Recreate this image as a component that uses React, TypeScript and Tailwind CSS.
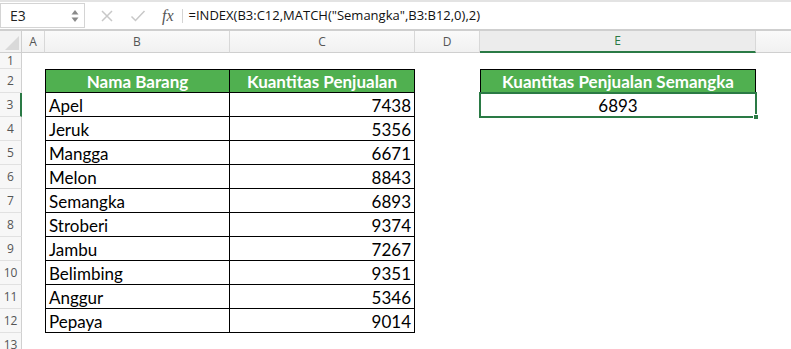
import React from "react";

const data: [string, number][] = [
  ["Apel", 7438],
  ["Jeruk", 5356],
  ["Mangga", 6671],
  ["Melon", 8843],
  ["Semangka", 6893],
  ["Stroberi", 9374],
  ["Jambu", 7267],
  ["Belimbing", 9351],
  ["Anggur", 5346],
  ["Pepaya", 9014],
];

const cellFont = { fontFamily: "Lato, 'Open Sans', sans-serif" };

function RowHead({ n, active }: { n: number; active?: boolean }) {
  return (
    <div
      className={`flex items-center justify-center border-b border-[#e1e1e1] bg-[#f7f7f7] text-[12px] text-[#555] ${
        active ? "border-r-2 border-r-[#2a7a45] bg-[#eaeaea]" : "border-r border-r-[#d0d0d0]"
      }`}
      style={{ fontFamily: "'Open Sans', sans-serif" }}
    >
      {n}
    </div>
  );
}

export default function App() {
  const colTemplate = "22px 23px 185px 185px 65px 276px 1fr";
  return (
    <div className="h-[349px] w-[791px] overflow-hidden bg-white" style={cellFont}>
      {/* Formula bar */}
      <div className="flex h-[29px] items-center border-t-2 border-[#e3e3e3] bg-white">
        <div className="flex h-[25px] w-[85px] items-center justify-between border border-[#d4d4d4] bg-white pl-[9px] pr-[5px]">
          <span className="text-[14px] text-[#222]" style={{ fontFamily: "'Open Sans', sans-serif" }}>E3</span>
          <svg width="8" height="16" viewBox="0 0 8 16">
            <path d="M4 2 L7.5 6.5 H0.5 Z" fill="#8a8a8a" />
            <path d="M4 14 L7.5 9.5 H0.5 Z" fill="#8a8a8a" />
          </svg>
        </div>
        <div className="flex h-full items-center">
          <svg width="14" height="14" viewBox="0 0 14 14" className="ml-[15px]">
            <path d="M2 2 L12 12 M12 2 L2 12" stroke="#c8c8c8" strokeWidth="1.5" />
          </svg>
          <svg width="16" height="14" viewBox="0 0 16 14" className="ml-[16px]">
            <path d="M1.5 7.5 L5.5 11.5 L14.5 2" stroke="#c8c8c8" strokeWidth="1.5" fill="none" />
          </svg>
          <span
            className="ml-[16px] text-[16px] italic text-[#555]"
            style={{ fontFamily: "'Liberation Serif', serif" }}
          >
            fx
          </span>
          <div className="ml-[8px] h-[14px] w-px bg-[#d4d4d4]" />
          <span
            className="ml-[6px] text-[13px] text-[#111]"
            style={{ fontFamily: "'Open Sans', sans-serif" }}
          >
            =INDEX(B3:C12,MATCH("Semangka",B3:B12,0),2)
          </span>
        </div>
      </div>
      <div className="h-[2px] border-t border-b border-[#cfcfcf]" />

      {/* Sheet grid */}
      <div
        className="grid"
        style={{
          gridTemplateColumns: colTemplate,
          gridTemplateRows: "22px 16px repeat(11, 24px) 24px",
        }}
      >
        {/* Column headers */}
        <div className="relative border-b border-r border-[#cfcfcf] bg-[#f3f3f3]">
          <svg className="absolute bottom-[2px] right-[2px]" width="14" height="14" viewBox="0 0 14 14">
            <path d="M14 0 L14 14 L0 14 Z" fill="#d9d9d9" />
          </svg>
        </div>
        {["A", "B", "C", "D"].map((c) => (
          <div
            key={c}
            className="flex items-center justify-center border-b border-r border-[#d8d8d8] border-b-[#cfcfcf] bg-gradient-to-b from-[#fafafa] to-[#f1f1f1] text-[12px] text-[#555]"
            style={{ fontFamily: "'Open Sans', sans-serif" }}
          >
            {c}
          </div>
        ))}
        <div
          className="flex items-center justify-center border-b-2 border-b-[#2a7a45] border-r border-r-[#d8d8d8] bg-[#ececec] text-[12px] text-[#2a7a45]"
          style={{ fontFamily: "'Open Sans', sans-serif" }}
        >
          E
        </div>
        <div className="border-b border-[#cfcfcf] bg-gradient-to-b from-[#fafafa] to-[#f1f1f1]" />

        {/* Row 1 */}
        <RowHead n={1} />
        <div className="col-span-6" />

        {/* Row 2 */}
        <RowHead n={2} />
        <div />
        <div className="flex items-center justify-center border border-black bg-[#50b050] pt-px text-[17px] font-bold leading-none text-white">
          Nama Barang
        </div>
        <div className="flex items-center justify-center border-y border-r border-black bg-[#50b050] pt-px text-[17px] font-bold leading-none text-white">
          Kuantitas Penjualan
        </div>
        <div />
        <div className="flex items-center justify-center border border-black bg-[#50b050] pt-px text-[17px] font-bold leading-none text-white">
          Kuantitas Penjualan Semangka
        </div>
        <div />

        {data.map(([name, qty], i) => (
          <React.Fragment key={name}>
            <RowHead n={i + 3} active={i === 0} />
            <div />
            <div className="flex items-center border-b border-l border-r border-black pl-[3px] pt-px text-[17px] leading-none text-black">
              {name}
            </div>
            <div className="flex items-center justify-end border-b border-r border-black pr-[3px] pt-px text-[17px] leading-none text-black">
              {qty}
            </div>
            <div />
            {i === 0 ? (
              <div className="relative flex items-center justify-center pt-px text-[17px] leading-none text-black">
                <div className="pointer-events-none absolute -left-px -top-px bottom-[-1px] right-[-1px] border-2 border-[#2a7a45]" />
                <div className="absolute bottom-[-3px] right-[-3px] h-[6px] w-[6px] border border-white bg-[#2a7a45]" />
                6893
              </div>
            ) : (
              <div />
            )}
            <div />
          </React.Fragment>
        ))}

        <RowHead n={13} />
        <div className="col-span-6" />
      </div>
    </div>
  );
}
